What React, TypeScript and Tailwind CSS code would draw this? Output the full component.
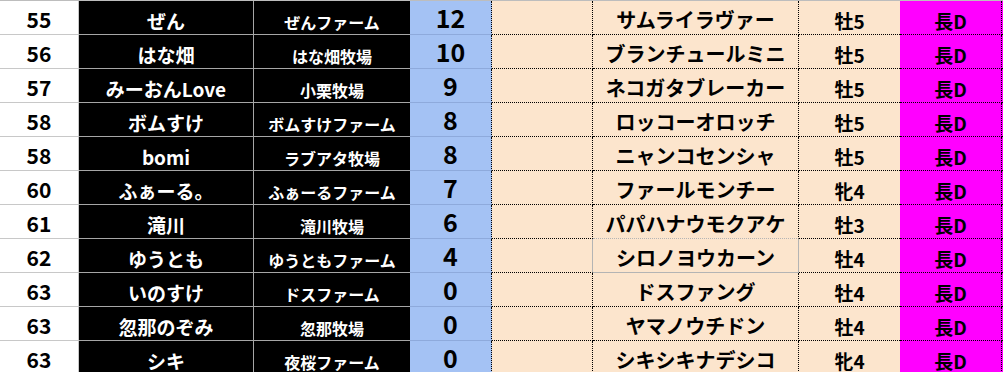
import React from 'react';

type Row = [string, string, string, string, string, string, string];

const rows: Row[] = [
  ['55', 'ぜん', 'ぜんファーム', '12', 'サムライラヴァー', '牡5', '長D'],
  ['56', 'はな畑', 'はな畑牧場', '10', 'ブランチュールミニ', '牡5', '長D'],
  ['57', 'みーおんLove', '小栗牧場', '9', 'ネコガタブレーカー', '牡5', '長D'],
  ['58', 'ボムすけ', 'ボムすけファーム', '8', 'ロッコーオロッチ', '牡5', '長D'],
  ['58', 'bomi', 'ラブアタ牧場', '8', 'ニャンコセンシャ', '牡5', '長D'],
  ['60', 'ふぁーる。', 'ふぁーるファーム', '7', 'ファールモンチー', '牝4', '長D'],
  ['61', '滝川', '滝川牧場', '6', 'パパハナウモクアケ', '牡3', '長D'],
  ['62', 'ゆうとも', 'ゆうともファーム', '4', 'シロノヨウカーン', '牡4', '長D'],
  ['63', 'いのすけ', 'ドスファーム', '0', 'ドスファング', '牡4', '長D'],
  ['63', '忽那のぞみ', '忽那牧場', '0', 'ヤマノウチドン', '牡4', '長D'],
  ['63', 'シキ', '夜桜ファーム', '0', 'シキシキナデシコ', '牝4', '長D'],
];

// index of the row whose horse cell is selected (solid grey box)
const SELECTED = 7;

const cell = 'flex h-[34px] shrink-0 items-end justify-center pb-[4px] leading-none font-bold whitespace-nowrap';

const App: React.FC = () => {
  return (
    <div
      className="w-[1003px] h-[372px] overflow-hidden bg-white border-t border-[#bdbdbd]"
      style={{ fontFamily: '"Noto Sans CJK JP", "Noto Sans", sans-serif' }}
    >
      {rows.map((r, i) => {
        const sel = i === SELECTED;
        const aboveSel = i === SELECTED - 1;
        return (
          <div key={i} className="flex">
            <div className={`${cell} w-[79px] bg-white text-black text-[21px] border-r border-b border-[#c8c8c8]`}>
              {r[0]}
            </div>
            <div className={`${cell} w-[175px] bg-black text-white text-[19px] border-r border-b border-[#a6a6a6]`}>
              {r[1]}
            </div>
            <div className={`${cell} w-[156px] bg-black text-white text-[16px] border-b border-[#a6a6a6]`}>
              {r[2]}
            </div>
            <div
              className={`${cell} w-[82px] bg-[#a4c2f4] text-black text-[25px] border-b border-b-[#8eaadc] border-r border-r-black border-dotted`}
              style={{ borderBottomStyle: 'solid' }}
            >
              {r[3]}
            </div>
            <div
              className={`${cell} w-[101px] bg-[#fce5cd] border-b border-b-black border-dotted border-r ${
                sel ? 'border-r-[#b4b4b4]' : 'border-r-black'
              }`}
              style={sel ? { borderRightStyle: 'solid' } : undefined}
            />
            <div
              className={`${cell} w-[206px] bg-[#fce5cd] text-black text-[20px] border-b border-r ${
                sel || aboveSel ? 'border-b-[#b4b4b4]' : 'border-b-black border-dotted'
              } ${sel ? 'border-r-[#b4b4b4]' : 'border-r-black border-dotted'}`}
            >
              {r[4]}
            </div>
            <div className={`${cell} w-[101px] bg-[#fce5cd] text-black text-[19px] border-b border-dotted border-black`}>
              {r[5]}
            </div>
            <div className={`${cell} w-[102px] bg-[#ff00ff] text-black text-[19px] border-b border-r border-dotted border-black`}>
              {r[6]}
            </div>
            <div className="h-[34px] flex-1 bg-[#ff00ff] border-b border-dotted border-black" />
          </div>
        );
      })}
    </div>
  );
};

export default App;
